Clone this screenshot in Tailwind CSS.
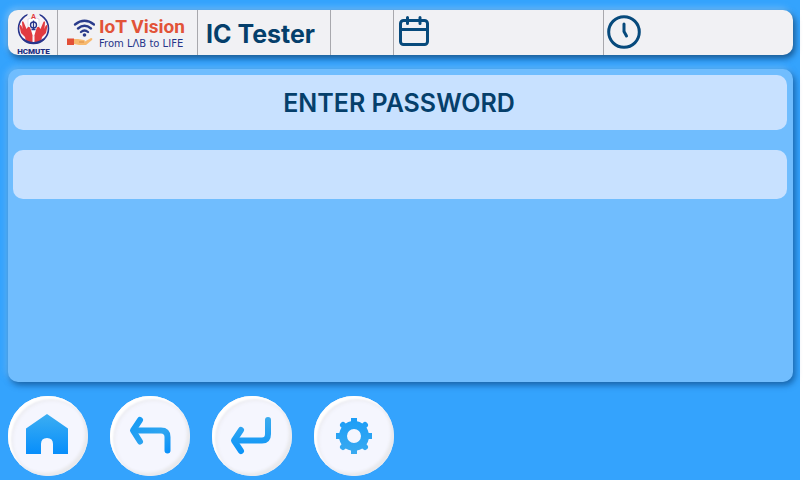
<!DOCTYPE html>
<html lang="en">
<head>
<meta charset="utf-8">
<meta name="viewport" content="width=device-width, initial-scale=1">
<title>IC Tester</title>
<script src="https://cdn.jsdelivr.net/npm/@tailwindcss/browser@4"></script>
</head>
<body class="bg-white pr-[5px] font-['Inter',sans-serif]">
<div class="flex min-h-screen flex-col bg-[#34a3fd] pt-[10px] pr-[7px] pb-1 pl-2">
  <header class="flex h-[45px] rounded-[10px] bg-[#f1f1f4] text-[#074a7c] shadow-[2px_3px_6px_rgba(0,40,80,0.65),-2px_-2px_6px_rgba(150,210,255,0.65)]">
    <div class="flex w-[50px] shrink-0 items-center justify-center border-r border-[#a8a8ad]">
      <svg class="h-[45px] w-[40px]" viewBox="0 0 40 45" role="img" aria-label="HCMUTE">
        <circle cx="20.500" cy="18.500" r="15" fill="#fbf3f6" stroke="#28358c" stroke-width="1.600"/>
        <path d="M15 2H26L27 7H14Z" fill="#f1f1f4"/>
        <path d="M15 9L20.500 7L26 9V19Q26 24 20.500 26Q15 24 15 19Z" fill="#fff" stroke="#c7cce8" stroke-width=".6"/>
        <text x="20.500" y="8.500" text-anchor="middle" font-family="Liberation Sans, sans-serif" font-weight="700" font-size="7" fill="#e23a40">A</text>
        <path d="M9 12Q10 10 11 13L13.500 19L15 17Q17 16 18 20L19.500 25V32H13L12 27L8 23L6.500 16Q7 14 8.500 16L9.500 19ZM32 12Q31 10 30 13L27.500 19L26 17Q24 16 23 20L21.500 25V32H28L29 27L33 23L34.500 16Q34 14 32.500 16L31.500 19Z" fill="#e13a40"/>
        <circle cx="20.500" cy="15" r="3" fill="#fff" stroke="#28358c" stroke-width="1.400"/>
        <path d="M20.500 10.500V19.500M18.500 19.500H22.500" stroke="#28358c" stroke-width="1.300"/>
        <path d="M10 29Q20.500 37 31 29" fill="none" stroke="#28358c" stroke-width="2"/>
        <text x="20.500" y="43.500" text-anchor="middle" font-family="Roboto, sans-serif" font-weight="900" font-size="8" fill="#202c80">HCMUTE</text>
      </svg>
    </div>
    <div class="flex w-[140px] shrink-0 items-center gap-1 border-r border-[#a8a8ad] pl-[9px]">
      <svg class="h-[30px] w-[28px] shrink-0" viewBox="0 0 28 30" aria-hidden="true">
        <g fill="none" stroke="#293b8b" stroke-linecap="round" stroke-width="2.300">
          <path d="M8 6.500Q17.500 -1 27 6.500M11 10.500Q17.500 5 24 10.500M14 14Q17.500 11 21 14"/>
        </g>
        <circle cx="17.500" cy="17" r="1.800" fill="#293b8b"/>
        <path d="M7 21H11L17 22Q19 23 17 24L24 20Q26 20 25 22L19 27H12L7 26Z" fill="#f7b96e"/>
        <path d="M12 24H17" stroke="#db8c43" stroke-width="1"/>
        <rect x="0" y="20.500" width="7" height="6.500" fill="#e24f37"/>
      </svg>
      <div class="flex flex-col">
        <span class="font-['Roboto',sans-serif] text-[19px] leading-[22px] font-bold whitespace-nowrap text-[#e25338]">IoT Vision</span>
        <span class="font-['DejaVu_Sans',sans-serif] text-[10px] leading-[12px] whitespace-nowrap text-[#26358a]">From LΛB to LIFE</span>
      </div>
    </div>
    <div class="flex w-[133px] shrink-0 items-center border-r border-[#a8a8ad] pt-[3px] pl-2">
      <h1 class="text-[25px] leading-8 font-bold whitespace-nowrap text-[#053f6b]">IC Tester</h1>
    </div>
    <div class="w-[63px] shrink-0 border-r border-[#a8a8ad]"></div>
    <div class="w-[210px] shrink border-r border-[#a8a8ad] pt-[5px] pl-1">
      <svg class="h-8 w-8" viewBox="0 0 32 32" fill="none" stroke="currentColor" stroke-width="3" stroke-linecap="round" role="img" aria-label="Date">
        <rect x="2.500" y="5.500" width="27" height="24" rx="3"/>
        <path d="M2.500 14.500H29.500M9.500 2.500V8.500M22 2.500V8.500"/>
      </svg>
    </div>
    <div class="min-w-0 flex-1 pt-1 pl-[3px]">
      <svg class="h-9 w-9" viewBox="0 0 36 36" fill="none" stroke="currentColor" stroke-width="3" stroke-linecap="round" stroke-linejoin="round" role="img" aria-label="Time">
        <circle cx="17" cy="18" r="15.300"/>
        <path d="M17 10V17.500L19.500 22"/>
      </svg>
    </div>
  </header>

  <main class="mt-[14px] flex min-h-[313px] flex-1 flex-col gap-5 rounded-[10px] bg-[#70bdfe] pt-[6px] pr-[6px] pl-[5px] shadow-[2px_3px_6px_rgba(0,60,120,0.65),-2px_-2px_6px_rgba(150,210,255,0.5)]">
    <label for="password" class="flex h-[55px] items-center justify-center rounded-[10px] bg-[#c8e1ff] pt-[2px] pr-[2px] text-[25px] font-semibold text-[#053f6b]">ENTER PASSWORD</label>
    <input id="password" type="password" class="h-[49px] w-full rounded-[10px] bg-[#c8e1ff] px-4 text-[25px] text-[#053f6b] outline-none">
  </main>

  <nav class="mt-[14px] flex gap-[22px]">
    <button type="button" aria-label="Home" class="flex size-20 items-center justify-center rounded-full bg-[#f5f6fe] shadow-[inset_3px_3px_2px_#fff,inset_-3px_-3px_3px_#e9e9ec,inset_4px_4px_4px_#e9e9ee]">
      <svg class="size-20" viewBox="0 0 80 80">
        <defs><linearGradient id="homeFill" x1="0" y1="0" x2="0" y2="1"><stop stop-color="#3caef2"/><stop offset="1" stop-color="#078efb"/></linearGradient></defs>
        <path d="M39 18L60 32.500V58H45V48Q45 42 39 42Q33 42 33 48V58H18V32.500Z" fill="url(#homeFill)"/>
      </svg>
    </button>
    <button type="button" aria-label="Back" class="flex size-20 items-center justify-center rounded-full bg-[#f5f6fe] shadow-[inset_3px_3px_2px_#fff,inset_-3px_-3px_3px_#e9e9ec,inset_4px_4px_4px_#e9e9ee]">
      <svg class="size-20" viewBox="0 0 80 80" fill="none" stroke="url(#backStroke)" stroke-width="6" stroke-linecap="round" stroke-linejoin="round">
        <defs><linearGradient id="backStroke" gradientUnits="userSpaceOnUse" x1="25" y1="20" x2="55" y2="60"><stop stop-color="#129af5"/><stop offset=".6" stop-color="#2fa5f0"/><stop offset="1" stop-color="#0790fb"/></linearGradient></defs>
        <path d="M30 24L23 34.500L30 45.500"/>
        <path d="M24 34.500H51Q57.500 34.500 57.500 41V54.500"/>
      </svg>
    </button>
    <button type="button" aria-label="Enter" class="flex size-20 items-center justify-center rounded-full bg-[#f5f6fe] shadow-[inset_3px_3px_2px_#fff,inset_-3px_-3px_3px_#e9e9ec,inset_4px_4px_4px_#e9e9ee]">
      <svg class="size-20" viewBox="0 0 80 80" fill="none" stroke="url(#enterStroke)" stroke-width="6" stroke-linecap="round" stroke-linejoin="round">
        <defs><linearGradient id="enterStroke" gradientUnits="userSpaceOnUse" x1="0" y1="22" x2="0" y2="57"><stop stop-color="#3aabee"/><stop offset="1" stop-color="#0a93f8"/></linearGradient></defs>
        <path d="M29 34L22 44.500L29 55"/>
        <path d="M23 44.500H50Q56 44.500 56 38V24"/>
      </svg>
    </button>
    <button type="button" aria-label="Settings" class="flex size-20 items-center justify-center rounded-full bg-[#f5f6fe] shadow-[inset_3px_3px_2px_#fff,inset_-3px_-3px_3px_#e9e9ec,inset_4px_4px_4px_#e9e9ee]">
      <svg class="size-20" viewBox="0 0 80 80">
        <defs><linearGradient id="gearFill" gradientUnits="userSpaceOnUse" x1="0" y1="22" x2="0" y2="58"><stop stop-color="#1b9df7"/><stop offset="1" stop-color="#3aaaf0"/></linearGradient></defs>
        <g fill="none" stroke="url(#gearFill)">
          <circle cx="40" cy="40" r="11" stroke-width="8"/>
          <path d="M40.010 22V28M40 52V58.010M22 40H28M52 40.010H58" stroke-width="6"/>
          <path d="M29 29L32 32M51 29L48 32M29 51L32 48M51 51L48 48" stroke-width="6" stroke-linecap="round"/>
        </g>
      </svg>
    </button>
  </nav>
</div>
</body>
</html>
